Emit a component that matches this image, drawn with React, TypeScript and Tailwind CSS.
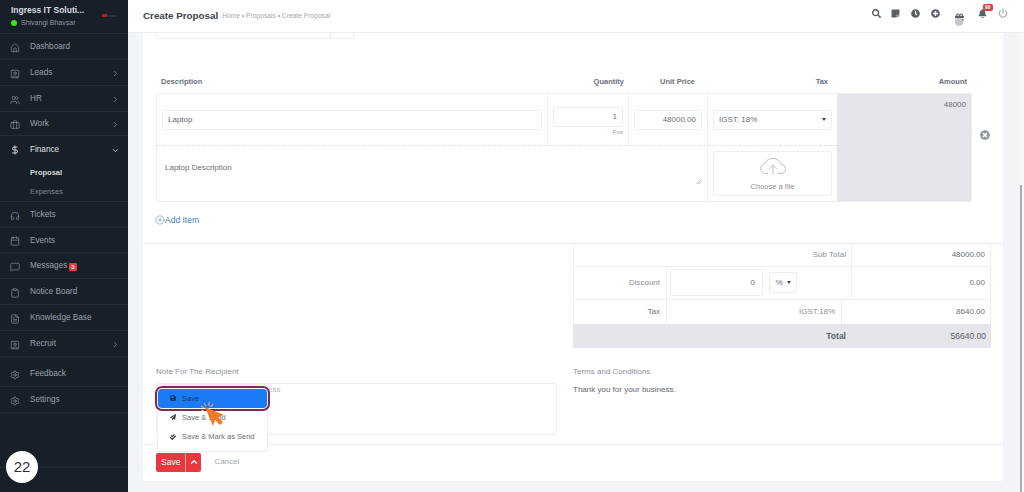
import {
  Briefcase,
  Calendar,
  ChevronDown,
  ChevronRight,
  ChevronUp,
  CirclePlus,
  Clipboard,
  DollarSign,
  FileText,
  Headphones,
  Home,
  MessageSquare,
  Power,
  Settings,
  SquareUser,
  UserSquare,
  Users,
} from "lucide-react";
import {
  FaBell,
  FaCheckDouble,
  FaClock,
  FaGift,
  FaPaperPlane,
  FaPlusCircle,
  FaSave,
  FaSearch,
  FaStickyNote,
  FaTimesCircle,
} from "react-icons/fa";

const menu = [
  { label: "Dashboard", icon: Home, row: "h-[26px]" },
  { label: "Leads", icon: SquareUser, row: "h-[26px]", arrow: true },
  { label: "HR", icon: Users, row: "h-[26px]", arrow: true },
  { label: "Work", icon: Briefcase, row: "h-[24px]", arrow: true },
];

const menuAfter = [
  { label: "Tickets", icon: Headphones, row: "h-[26px]" },
  { label: "Events", icon: Calendar, row: "h-[25px]" },
  { label: "Messages", icon: MessageSquare, row: "h-[26px]", badge: "3" },
  { label: "Notice Board", icon: Clipboard, row: "h-[26px]" },
  { label: "Knowledge Base", icon: FileText, row: "h-[26px]" },
  { label: "Recruit", icon: UserSquare, row: "h-[26px]", arrow: true },
  { label: "Feedback", icon: Settings, row: "mt-[4px] h-[26px]" },
  { label: "Settings", icon: Settings, row: "h-[26px]" },
];

type Item = {
  label: string;
  icon: typeof Home;
  row: string;
  arrow?: boolean;
  badge?: string;
};

function MenuRow({ item }: { item: Item }) {
  const Icon = item.icon;
  return (
    <div className={`flex shrink-0 items-center border-b border-[#242d38] pl-[10px] pr-[8px] pt-[2px] text-[8.2px] text-[#98a1ac] ${item.row}`}>
      <Icon size={10} strokeWidth={1.4} className="shrink-0 text-[#9aa2ac]" />
      <span className="ml-[10px]">{item.label}</span>
      {item.badge && (
        <span className="ml-[2px] rounded-[1px] bg-[#e5393f] px-[2px] text-[6px] font-bold leading-[8px] text-white">{item.badge}</span>
      )}
      {item.arrow && <ChevronRight size={9} className="ml-auto text-[#8a929c]" />}
    </div>
  );
}

function Sidebar() {
  return (
    <aside className="flex h-full w-[128px] shrink-0 flex-col bg-[#171f29]">
      <div className="flex h-[34px] shrink-0 items-center border-b border-[#242d38] pb-[2px] pl-[11px] pr-[10px]">
        <div className="min-w-0">
          <p className="text-[8.5px] font-bold leading-[12px] text-[#d9dde1]">Ingress IT Soluti...</p>
          <div className="mt-[2px] flex items-center gap-[4px] text-[7px] leading-[10px] text-[#8f98a3]">
            <span className="h-[6px] w-[6px] rounded-full bg-[#3ee01f]" />
            Shivangi Bhavsar
          </div>
        </div>
        <span className="ml-auto h-[3px] w-[5px] bg-[#b01d33]" />
        <span className="mr-[1px] h-[2px] w-[10px] bg-[#2a2f38]" />
      </div>
      {menu.map((item) => (
        <MenuRow key={item.label} item={item} />
      ))}
      <div className="flex h-[26px] shrink-0 items-center pl-[10px] pr-[8px] pt-[2px] text-[8.2px] text-[#dfe2e6]">
        <DollarSign size={10} strokeWidth={2.2} className="text-[#d5d8dc]" />
        <span className="ml-[10px]">Finance</span>
        <ChevronDown size={9} className="ml-auto" />
      </div>
      <div className="flex h-[40px] shrink-0 flex-col justify-start border-b border-[#242d38] pl-[30px] pt-[6px] text-[7.5px]">
        <p className="mb-[9px] font-bold leading-[10px] text-[#d5d9dd]">Proposal</p>
        <p className="leading-[10px] text-[#7f8893]">Expenses</p>
      </div>
      {menuAfter.map((item) => (
        <MenuRow key={item.label} item={item} />
      ))}
      <div className="mt-[54px] border-t border-[#242d38]" />
    </aside>
  );
}

function Topbar() {
  return (
    <header className="flex h-[33px] shrink-0 items-center border-b border-[#eceef1] bg-white pl-[15px] pr-[16px]">
      <h1 className="pt-[1px] text-[9.8px] font-bold text-[#3d4249]">Create Proposal</h1>
      <p className="ml-[4px] text-[6.7px] text-[#a3a8ae]">Home • Proposals • Create Proposal</p>
      <div className="mb-[6px] ml-auto flex items-center text-[#5b6066]">
        <FaSearch size={9} />
        <FaStickyNote size={9} className="ml-[10px]" />
        <FaClock size={9} className="ml-[11px]" />
        <FaPlusCircle size={9} className="ml-[11px]" />
        <span className="relative ml-[15px] mt-[8px]">
          <FaGift size={9} />
          <span className="absolute left-0 top-[5px] h-[8px] w-[8px] rounded-full bg-[#c5c7c9]" />
        </span>
        <span className="relative ml-[14px]">
          <FaBell size={9} />
          <span className="absolute left-[5px] top-[-5px] rounded-[2px] bg-[#e5393f] px-[2px] text-[5px] font-bold leading-[7px] text-white">98</span>
        </span>
        <Power size={10} strokeWidth={1.6} className="ml-[11px]" />
      </div>
    </header>
  );
}

const inputBox = "rounded-[2px] border border-[#eceef1] bg-white";
const cell = "border-[#eceef1]";

function ItemTable() {
  return (
    <div>
      <div className="flex h-[24px] w-[816px] items-center pl-[5px] pt-[1px] text-[7.5px] font-bold text-[#6a7077]">
        <span className="w-[387px]">Description</span>
        <span className="w-[81px] pr-[5px] text-right">Quantity</span>
        <span className="w-[79px] pr-[13px] text-right">Unit Price</span>
        <span className="w-[129px] pr-[9px] text-right">Tax</span>
        <span className="w-[135px] pr-[5px] text-right">Amount</span>
      </div>
      <div className="flex items-start">
        <div className={`flex h-[109px] w-[816px] rounded-[2px] border ${cell}`}>
          <div className="flex w-[680px] flex-col">
            <div className="flex h-[52px] border-b border-dashed border-[#dfe1e4]">
              <div className={`flex w-[391px] items-center border-r px-[5px] ${cell}`}>
                <div className={`flex h-[20px] w-full items-center pl-[5px] text-[8px] text-[#63686e] ${inputBox}`}>Laptop</div>
              </div>
              <div className={`w-[81px] border-r px-[5px] pt-[13px] ${cell}`}>
                <div className={`flex h-[20px] items-center justify-end pr-[5px] text-[8px] text-[#6b7076] ${inputBox}`}>1</div>
                <p className="mt-[1px] text-right text-[6px] leading-[9px] text-[#9a9fa5]">Pos</p>
              </div>
              <div className={`flex w-[79px] items-center border-r px-[5px] ${cell}`}>
                <div className={`flex h-[20px] w-full items-center justify-end pr-[5px] text-[8px] text-[#6b7076] ${inputBox}`}>48000.00</div>
              </div>
              <div className="flex w-[129px] items-center px-[5px]">
                <div className={`flex h-[20px] w-full items-center justify-between px-[5px] text-[8px] text-[#6b7076] ${inputBox}`}>
                  IGST: 18%
                  <span className="border-x-[2px] border-t-[3px] border-x-transparent border-t-[#3d4249]" />
                </div>
              </div>
            </div>
            <div className="flex flex-1">
              <div className={`relative w-[551px] border-r pl-[8px] pt-[16px] text-[8px] text-[#6b7076] ${cell}`}>
                Laptop Description
                <svg width="6" height="6" viewBox="0 0 6 6" className="absolute bottom-[16px] right-[5px]">
                  <path d="M1 5 5 1M3.5 5 5 3.5" stroke="#8d9298" strokeWidth="0.7" />
                </svg>
              </div>
              <div className="flex flex-1 px-[5px] py-[5px]">
                <div className={`flex w-full flex-col items-center pt-[5px] text-[7.5px] text-[#8d9298] ${inputBox}`}>
                  <svg width="28" height="18" viewBox="0 0 28 18" fill="none" stroke="#b7babe" strokeWidth="0.9">
                    <path d="M9 16.5H6.5a5 5 0 0 1-.7-9.9A8.8 8.8 0 0 1 22 7a4.8 4.8 0 0 1 .5 9.5H19" />
                    <path d="M14 17.5V8.5M10 12.2l4-4 4 4" />
                  </svg>
                  <span className="mt-[6px]">Choose a file</span>
                </div>
              </div>
            </div>
          </div>
          <div className="flex-1 bg-[#e4e6e9] pr-[5px] pt-[5px] text-right text-[8px] text-[#6b7076]">48000</div>
        </div>
        <FaTimesCircle size={10} className="ml-[8px] mt-[37px] text-[#8e979f]" />
      </div>
      <div className="ml-[-1px] mt-[12px] flex items-center text-[8.5px] text-[#3f7fc0]">
        <CirclePlus size={10} strokeWidth={1.3} />
        Add Item
      </div>
    </div>
  );
}

function Totals() {
  return (
    <div className="w-[418px] text-[8px] text-[#8d9298]">
      <div className={`flex h-[23px] border-x border-b ${cell}`}>
        <span className={`flex w-[278px] items-center justify-end border-r pr-[5px] ${cell}`}>Sub Total</span>
        <span className="flex flex-1 items-center justify-end pr-[5px] text-[#6b7076]">48000.00</span>
      </div>
      <div className={`flex h-[33px] border-x border-b ${cell}`}>
        <span className={`flex w-[93px] items-center justify-end border-r pr-[6px] ${cell}`}>Discount</span>
        <div className={`flex w-[185px] items-center border-r pl-[3px] ${cell}`}>
          <span className={`flex h-[27px] w-[93px] items-center justify-end pr-[7px] text-[#6b7076] ${inputBox}`}>0</span>
          <span className={`ml-[6px] flex h-[21px] w-[28px] items-center justify-center gap-[4px] text-[#6b7076] ${inputBox}`}>
            %
            <span className="border-x-[2px] border-t-[3px] border-x-transparent border-t-[#3d4249]" />
          </span>
        </div>
        <span className="flex flex-1 items-center justify-end pr-[5px] text-[#6b7076]">0.00</span>
      </div>
      <div className={`flex h-[24px] border-x ${cell}`}>
        <span className={`flex w-[93px] items-center justify-end border-r pr-[6px] text-[#6b7076] ${cell}`}>Tax</span>
        <span className={`flex w-[175px] items-center justify-end border-r pr-[6px] ${cell}`}>IGST:18%</span>
        <span className="flex flex-1 items-center justify-end pr-[5px] text-[#6b7076]">8640.00</span>
      </div>
      <div className="flex h-[24px] bg-[#e4e6e9] pt-[1px] text-[#5b6066]">
        <span className="flex w-[278px] items-center justify-end pr-[5px] text-[8.5px] font-bold">Total</span>
        <span className="flex flex-1 items-center justify-end pr-[5px] text-[8.5px]">56640.00</span>
      </div>
    </div>
  );
}

function SaveMenu() {
  return (
    <div className="absolute left-0 top-0 z-10 w-[111px] rounded-[2px] border border-[#eceef1] bg-white pb-[4px] pt-[4px] text-[7.5px] text-[#6b7076]">
      <div className="flex h-[19px] items-center gap-[6px] rounded-[4px] bg-[#1b7bf5] pl-[12px] text-[#163a6b] outline-2 outline-offset-1 outline-[#7c2a56]">
        <FaSave size={6} className="text-[#10264a]" />
        Save
      </div>
      <div className="flex h-[19px] items-center gap-[6px] pl-[12px]">
        <FaPaperPlane size={6} className="text-[#33383e]" />
        Save &amp; Send
      </div>
      <div className="flex h-[20px] items-center gap-[6px] pl-[12px]">
        <FaCheckDouble size={6} className="text-[#33383e]" />
        Save &amp; Mark as Send
      </div>
      {/* recorded mouse pointer */}
      <svg width="26" height="28" viewBox="0 0 26 28" className="absolute left-[43px] top-[15px]">
        <path d="M4 7 12 26 14 20 19 25 22 22 17 17 23 15Z" fill="#f3782a" />
        <path d="M3 3 5 6M8 2 8 6M12 4 10 7M0 6 3 8M0 11 3 10" stroke="#e8a27c" strokeWidth="1.2" />
      </svg>
    </div>
  );
}

export default function App() {
  return (
    <div className="relative flex h-[492px] w-[1024px] overflow-hidden bg-[#f2f4f7] font-['Liberation_Sans',Arial,sans-serif]">
      <Sidebar />
      <div className="flex min-w-0 flex-1 flex-col">
        <Topbar />
        <main className="flex min-h-0 flex-1">
          <div className="ml-[15px] flex h-[448px] w-[860px] flex-col rounded-b-[3px] bg-white">
            <div className="px-[13px]">
              <div className={`flex h-[6px] w-[198px] rounded-b-[2px] border-x border-b ${cell}`}>
                <span className={`ml-auto w-[23px] border-l ${cell}`} />
              </div>
              <div className="mt-[30px]">
                <ItemTable />
              </div>
            </div>
            <div className="mt-[16px] flex justify-end border-t border-[#eceef1] pr-[12px]">
              <Totals />
            </div>
            <div className="mt-[18px] flex px-[13px]">
              <div className="w-[401px]">
                <p className="text-[8px] leading-[12px] text-[#8d9298]">Note For The Recipient</p>
                <div className={`relative mt-[5px] h-[52px] ${inputBox}`}>
                  <span className="absolute left-[111px] top-[1px] text-[8px] leading-[10px] text-[#b5b9bd]">ess</span>
                  <SaveMenu />
                </div>
              </div>
              <div className="ml-[16px] text-[8px]">
                <p className="leading-[12px] text-[#8d9298]">Terms and Conditions</p>
                <p className="mt-[6px] leading-[12px] text-[#63686e]">Thank you for your business.</p>
              </div>
            </div>
            <div className="mt-[9px] flex items-center border-t border-[#eceef1] px-[13px] pt-[8px]">
              <div className="flex h-[19px] items-center rounded-[2px] bg-[#e9383f] text-[8.5px] text-white">
                <span className="px-[5px]">Save</span>
                <span className="flex h-full w-[16px] items-center justify-center border-l border-[#f3a0a3]">
                  <ChevronUp size={10} strokeWidth={3} />
                </span>
              </div>
              <span className="ml-[13px] text-[8px] text-[#a3a8ae]">Cancel</span>
            </div>
          </div>
          <div className="ml-auto w-[4px] bg-[#f6f7f9] pt-[152px]">
            <div className="h-[307px] w-[2px] bg-[#a9abb0]" />
          </div>
        </main>
      </div>
      <div className="absolute left-[6px] top-[451px] flex h-[32px] w-[32px] items-center justify-center rounded-full bg-white text-[15px] text-[#2f3338]">22</div>
    </div>
  );
}
